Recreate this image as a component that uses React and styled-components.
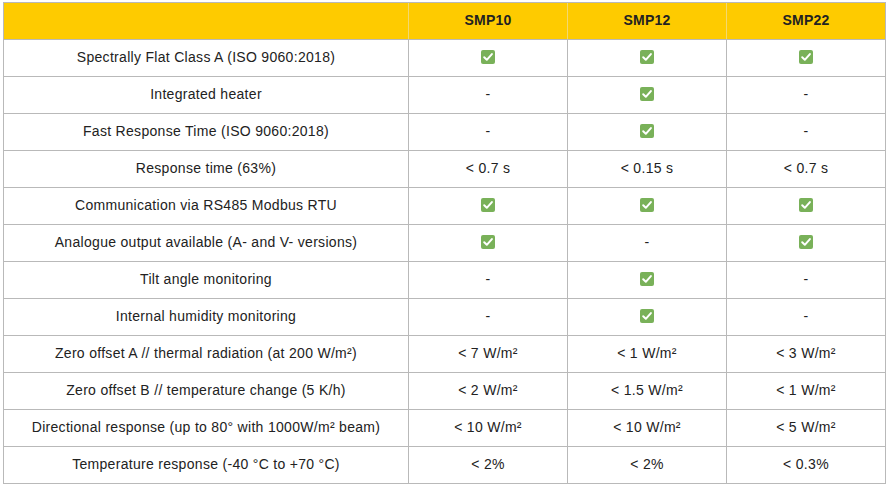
import React from "react";
import styled, { createGlobalStyle } from "styled-components";

const Global = createGlobalStyle`
  html, body { margin: 0; padding: 0; background: #fff; }
  body { font-family: "Liberation Sans", Arial, sans-serif; }
`;

const Page = styled.div`
  padding: 2px 0 0 3px;
`;

const Table = styled.div`
  width: 883px;
  display: flex;
  flex-direction: column;
  gap: 1px;
  background: #b9b9b9;
  border: 1px solid #b9b9b9;
  box-sizing: border-box;
`;

const Row = styled.div`
  display: grid;
  grid-template-columns: 404px 158px 158px 158px;
  column-gap: 1px;
  height: 36px;
  background: ${(p) => (p.$head ? "#f3d870" : "#b9b9b9")};
`;

const Cell = styled.div`
  display: flex;
  align-items: center;
  justify-content: center;
  box-sizing: border-box;
  padding-bottom: 2px;
  background: ${(p) => (p.$head ? "#fecb00" : "#fff")};
  color: #222;
  font-size: 14px;
  font-weight: ${(p) => (p.$head ? 700 : 400)};
  letter-spacing: ${(p) => (p.$head ? "0.2px" : "0.3px")};
  white-space: nowrap;
`;

const CheckIcon = styled.svg`
  display: block;
  margin-bottom: 1px;
`;

const Check = () => (
  <CheckIcon width="14" height="14" viewBox="0 0 14 14" aria-label="yes">
    <rect x="0" y="0" width="14" height="14" rx="2" fill="#79b159" />
    <path
      d="M3.2 7.3 L5.8 9.8 L10.9 4.1"
      fill="none"
      stroke="#fff"
      strokeWidth="2"
      strokeLinecap="round"
      strokeLinejoin="round"
    />
  </CheckIcon>
);

const Y = "Y";
const rows = [
  ["Spectrally Flat Class A (ISO 9060:2018)", Y, Y, Y],
  ["Integrated heater", "-", Y, "-"],
  ["Fast Response Time (ISO 9060:2018)", "-", Y, "-"],
  ["Response time (63%)", "< 0.7 s", "< 0.15 s", "< 0.7 s"],
  ["Communication via RS485 Modbus RTU", Y, Y, Y],
  ["Analogue output available (A- and V- versions)", Y, "-", Y],
  ["Tilt angle monitoring", "-", Y, "-"],
  ["Internal humidity monitoring", "-", Y, "-"],
  ["Zero offset A // thermal radiation (at 200 W/m²)", "< 7 W/m²", "< 1 W/m²", "< 3 W/m²"],
  ["Zero offset B // temperature change (5 K/h)", "< 2 W/m²", "< 1.5 W/m²", "< 1 W/m²"],
  ["Directional response (up to 80° with 1000W/m² beam)", "< 10 W/m²", "< 10 W/m²", "< 5 W/m²"],
  ["Temperature response (-40 °C to +70 °C)", "< 2%", "< 2%", "< 0.3%"],
];

export default function App() {
  return (
    <>
      <Global />
      <Page>
        <Table>
          <Row $head>
            <Cell $head />
            <Cell $head>SMP10</Cell>
            <Cell $head>SMP12</Cell>
            <Cell $head>SMP22</Cell>
          </Row>
          {rows.map((r, i) => (
            <Row key={i}>
              {r.map((v, j) => (
                <Cell key={j}>{v === Y ? <Check /> : v}</Cell>
              ))}
            </Row>
          ))}
        </Table>
      </Page>
    </>
  );
}
